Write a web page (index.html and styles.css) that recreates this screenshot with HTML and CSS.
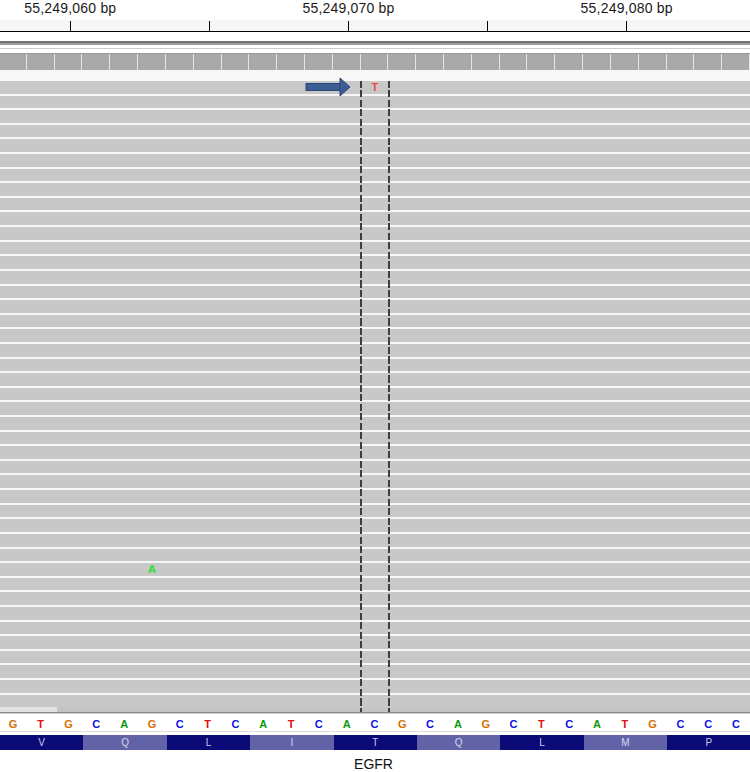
FILE: index.html
```html
<!DOCTYPE html>
<html lang="en">

<head>
  <meta charset="UTF-8" />
  <title>EGFR alignments</title>
  <link rel="stylesheet" href="styles.css">
</head>

<body>
  <div class="igv">

    <div class="ruler-labels">
      <span>55,249,060 bp</span>
      <span>55,249,070 bp</span>
      <span>55,249,080 bp</span>
    </div>
    <div class="ruler-ticks">
      <i></i><i></i><i></i><i></i><i></i><i></i>
    </div>

    <div class="ideo"></div>
    <div class="thin-line"></div>

    <div class="coverage track">
      <b></b><b></b><b></b><b></b><b></b><b></b><b></b><b></b><b></b>
      <b></b><b></b><b></b><b></b><b></b><b></b><b></b><b></b><b></b>
      <b></b><b></b><b></b><b></b><b></b><b></b><b></b><b></b><b></b>
    </div>

    <div class="reads-top"></div>

    <div class="reads">
      <div class="read track"><span class="mm mm-t" style="grid-column: 14">T</span></div>
      <div class="read"></div>
      <div class="read"></div>
      <div class="read"></div>
      <div class="read"></div>
      <div class="read"></div>
      <div class="read"></div>
      <div class="read"></div>
      <div class="read"></div>
      <div class="read"></div>
      <div class="read"></div>
      <div class="read"></div>
      <div class="read"></div>
      <div class="read"></div>
      <div class="read"></div>
      <div class="read"></div>
      <div class="read"></div>
      <div class="read"></div>
      <div class="read"></div>
      <div class="read"></div>
      <div class="read"></div>
      <div class="read"></div>
      <div class="read"></div>
      <div class="read"></div>
      <div class="read"></div>
      <div class="read"></div>
      <div class="read"></div>
      <div class="read"></div>
      <div class="read"></div>
      <div class="read"></div>
      <div class="read"></div>
      <div class="read"></div>
      <div class="read"></div>
      <div class="read track"><span class="mm mm-a" style="grid-column: 6">A</span></div>
      <div class="read"></div>
      <div class="read"></div>
      <div class="read"></div>
      <div class="read"></div>
      <div class="read"></div>
      <div class="read"></div>
      <div class="read"></div>
      <div class="read"></div>
      <div class="read"></div>

      <!-- marker arrow + center lines drawn over the reads -->
      <svg class="arrow" width="48" height="21" viewBox="0 0 48 21">
        <rect x="2" y="6.5" width="35" height="7" fill="#3b5e93" stroke="#2a4676" stroke-width="1" />
        <polygon points="36,1 46,10 36,19" fill="#3b5e93" stroke="#2a4676" stroke-width="1" />
      </svg>
      <div class="center-line left"></div>
      <div class="center-line right"></div>
    </div>

    <div class="reads-end">
      <div class="scroll-stub"></div>
      <div class="scroll-bar"></div>
    </div>

    <div class="seq track">
      <span class="g">G</span><span class="t">T</span><span class="g">G</span>
      <span class="c">C</span><span class="a">A</span><span class="g">G</span>
      <span class="c">C</span><span class="t">T</span><span class="c">C</span>
      <span class="a">A</span><span class="t">T</span><span class="c">C</span>
      <span class="a">A</span><span class="c">C</span><span class="g">G</span>
      <span class="c">C</span><span class="a">A</span><span class="g">G</span>
      <span class="c">C</span><span class="t">T</span><span class="c">C</span>
      <span class="a">A</span><span class="t">T</span><span class="g">G</span>
      <span class="c">C</span><span class="c">C</span><span class="c">C</span>
    </div>

    <div class="aa">
      <span class="dark">V</span>
      <span class="light">Q</span>
      <span class="dark">L</span>
      <span class="light">I</span>
      <span class="dark">T</span>
      <span class="light">Q</span>
      <span class="dark">L</span>
      <span class="light">M</span>
      <span class="dark">P</span>
    </div>

    <div class="gene">EGFR</div>

  </div>
</body>

</html>
```

FILE: styles.css
```css
body {
  margin: 0;
  background: #fff;
  font-family: "Liberation Sans", Arial, sans-serif;
}

.igv {
  width: 750px;
  height: 772px;
  overflow: hidden;
}

/* one column per base pair */
.track {
  display: grid;
  grid-template-columns: repeat(27, 27.82px);
  margin-left: -1px;
}

/* ruler */
.ruler-labels {
  display: flex;
  height: 20px;
  margin-left: -68.8px;
}

.ruler-labels span {
  flex: 0 0 278.2px;
  text-align: center;
  font-size: 14px;
  line-height: 16px;
  letter-spacing: 0.2px;
  color: #1a1a1a;
}

.ruler-ticks {
  display: flex;
  height: 11px;
  margin-left: -68.3px;
  background: #f6f6f6;
  border-bottom: 1px solid #000;
  width: 900px;
}

.ruler-ticks i {
  flex: 0 0 139.1px;
  box-sizing: border-box;
  margin-top: 1px;
  border-right: 1px solid #000;
}

.ideo {
  margin-top: 9px;
  height: 2px;
  border-bottom: 2px solid #9c9c9c;
  background: #747474;
}

.thin-line {
  margin-top: 3px;
  height: 1px;
  background: #cdcdcd;
}

/* coverage */
.coverage {
  margin-top: 4px;
  height: 17px;
  background: #a9a9a9;
  border-top: 1px solid #999;
  box-sizing: border-box;
}

.coverage b {
  border-right: 1px solid #e6e6e6;
}

.reads-top {
  height: 11px;
  background: #f8f8f8;
}

/* reads */
.reads {
  position: relative;
  display: flex;
  flex-direction: column;
  gap: 2px;
  background: #f6f6f6;
}

.read {
  height: 12.61px;
  background: #c8c8c8;
}

.mm {
  text-align: center;
  font-size: 11px;
  font-weight: bold;
  line-height: 13px;
}

.mm-t {
  color: #ef4848;
  padding-left: 1px;
}

.mm-a {
  color: #27e027;
}

.arrow {
  position: absolute;
  left: 304px;
  top: -4px;
}

.center-line {
  position: absolute;
  top: 0;
  bottom: -5px;
  width: 2px;
  background: repeating-linear-gradient(to bottom, #3e3e3e 0 7px, transparent 7px 9.5px);
}

.center-line.left {
  left: 360px;
}

.center-line.right {
  left: 388px;
}

.reads-end {
  display: flex;
  height: 5px;
  background: #f6f6f6;
}

.scroll-stub {
  width: 57px;
  background: #e2e2e2;
}

.scroll-bar {
  flex: 1;
  background: #c4c4c4;
}

/* reference sequence */
.seq {
  height: 18px;
  border-top: 1px solid #8a8a8a;
  box-shadow: inset 0 1px 0 #cfcfcf;
  border-bottom: 1px solid #dcdcdc;
  margin-bottom: 3px;
}

.seq span {
  text-align: center;
  font-size: 11px;
  font-weight: bold;
  line-height: 19px;
  padding-top: 2px;
}

.g { color: #d17105; }
.t { color: #e01010; }
.c { color: #1111dd; }
.a { color: #0a9a0a; }

/* amino acids */
.aa {
  display: grid;
  grid-template-columns: repeat(9, 83.4px);
  height: 15px;
}

.aa span {
  text-align: center;
  font-size: 10px;
  line-height: 15px;
}

.aa .dark {
  background: #0b0b78;
  color: #c8c8ea;
}

.aa .light {
  background: #6262a6;
  color: #d6d6ee;
}

.gene {
  padding-top: 8px;
  padding-right: 3px;
  text-align: center;
  font-size: 14px;
  line-height: 13px;
  color: #111;
}
```
